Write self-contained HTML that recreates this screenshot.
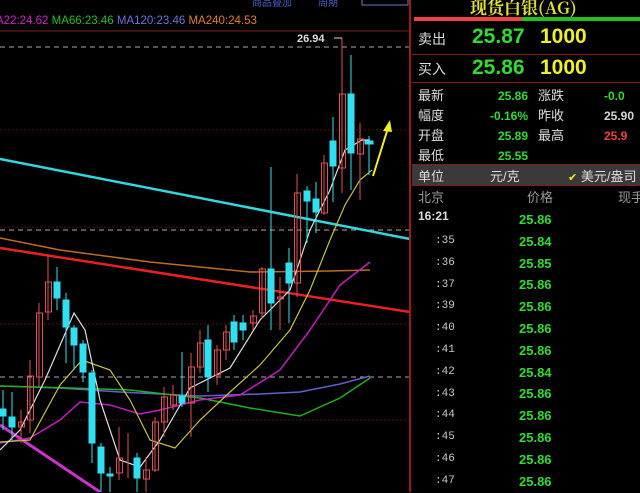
<!DOCTYPE html>
<html><head><meta charset="utf-8"><style>
body{margin:0;width:640px;height:492px;background:#000;overflow:hidden;position:relative;font-family:"Liberation Sans","Noto Sans CJK SC",sans-serif}
.a{position:absolute;white-space:nowrap}
.g{color:#2fdc2f}.y{color:#f0f020}.w{color:#d8d8d8}.r{color:#f04040}
.t{font-size:11px;color:#c8c8c8;font-family:"Liberation Mono",monospace}
.p{font-size:13px;font-weight:bold;color:#2fdc2f;left:519px}
</style></head><body>
<svg class="a" style="left:0;top:0" width="412" height="492" viewBox="0 0 412 492">
<g stroke="#5a1010" stroke-dasharray="2,2" stroke-width="1">
<line x1="0" y1="130" x2="410" y2="130"/><line x1="0" y1="227" x2="410" y2="227"/><line x1="0" y1="324" x2="410" y2="324"/><line x1="0" y1="420" x2="410" y2="420"/></g>
<line x1="0" y1="31" x2="410" y2="31" stroke="#7a1818"/>
<g stroke="#aaa" stroke-dasharray="5,4"><line x1="0" y1="47" x2="410" y2="47"/><line x1="0" y1="230" x2="410" y2="230"/><line x1="0" y1="377" x2="410" y2="377"/></g>
<polyline points="0,238 60,250 150,262 250,272 330,271 370,270" fill="none" stroke="#c06a1e" stroke-width="1.5"/>
<line x1="0" y1="248" x2="410" y2="312" stroke="#e82020" stroke-width="2.5"/>
<line x1="0" y1="159" x2="410" y2="239" stroke="#30d8e0" stroke-width="2.5"/>
<line x1="0" y1="425" x2="100" y2="492" stroke="#d030d0" stroke-width="3"/>
<polyline points="0,386 60,388 120,392 200,396 260,394 300,392 340,384 370,376" fill="none" stroke="#6060d0" stroke-width="1.5"/>
<polyline points="0,386 70,388 130,390 200,398 250,408 300,416 340,398 370,378" fill="none" stroke="#20b020" stroke-width="1.5"/>
<polyline points="0,443 30,438 60,420 80,402 110,405 140,414 160,410 200,400 240,395 280,370 310,330 340,285 370,262" fill="none" stroke="#c020c0" stroke-width="1.5"/>
<polyline points="0,442 30,440 60,385 82,360 110,370 130,400 150,440 175,448 200,420 230,392 260,365 290,330 310,290 330,240 345,205 360,180 372,170" fill="none" stroke="#c8c040" stroke-width="1.2"/>
<polyline points="0,450 20,430 45,380 74,313 85,330 100,400 120,460 140,467 160,440 190,388 230,368 260,320 290,290 310,230 330,190 345,150 362,140 370,140" fill="none" stroke="#ddd" stroke-width="1.2"/>
<g stroke-width="1">
<!-- candles: x, body top, body bottom, hi, lo -->
<g stroke="#30e0f0" fill="#30e0f0">
<line x1="3" y1="390" x2="3" y2="430"/><rect x="0" y="409" width="6" height="7"/>
<line x1="12" y1="392" x2="12" y2="440"/><rect x="9" y="417" width="6" height="10"/>
<line x1="57" y1="267" x2="57" y2="310"/><rect x="54" y="282" width="6" height="16"/>
<line x1="66" y1="293" x2="66" y2="363"/><rect x="63" y="300" width="6" height="27"/>
<line x1="74" y1="325" x2="74" y2="370"/><rect x="71" y="328" width="6" height="17"/>
<line x1="83" y1="340" x2="83" y2="382"/><rect x="80" y="344" width="6" height="28"/>
<line x1="92" y1="370" x2="92" y2="463"/><rect x="89" y="373" width="6" height="70"/>
<line x1="101" y1="443" x2="101" y2="492"/><rect x="98" y="447" width="6" height="26"/>
<line x1="110" y1="467" x2="110" y2="492"/><rect x="107" y="474" width="6" height="2"/>
<line x1="137" y1="453" x2="137" y2="492"/><rect x="134" y="458" width="6" height="20"/>
<line x1="182" y1="352" x2="182" y2="407"/><rect x="179" y="396" width="6" height="7"/>
<line x1="208" y1="325" x2="208" y2="392"/><rect x="205" y="340" width="6" height="37"/>
<line x1="234" y1="315" x2="234" y2="350"/><rect x="231" y="322" width="6" height="20"/>
<line x1="243" y1="315" x2="243" y2="340"/><rect x="240" y="323" width="6" height="7"/>
<line x1="271" y1="167" x2="271" y2="330"/><rect x="268" y="269" width="6" height="34"/>
<line x1="289" y1="248" x2="289" y2="323"/><rect x="286" y="263" width="6" height="20"/>
<line x1="307" y1="186" x2="307" y2="243"/><rect x="304" y="191" width="6" height="10"/>
<line x1="316" y1="182" x2="316" y2="233"/><rect x="313" y="199" width="6" height="13"/>
<line x1="333" y1="117" x2="333" y2="202"/><rect x="330" y="141" width="6" height="25"/>
<line x1="351" y1="55" x2="351" y2="190"/><rect x="348" y="94" width="6" height="59"/>
<line x1="369" y1="136" x2="369" y2="175"/><rect x="365" y="141" width="8" height="3"/>
</g>
<g stroke="#e05050" fill="none">
<line x1="21" y1="410" x2="21" y2="443"/><rect x="18.5" y="422" width="6" height="5"/>
<line x1="30" y1="360" x2="30" y2="433"/><rect x="27.5" y="376" width="6" height="44"/>
<line x1="39" y1="303" x2="39" y2="387"/><rect x="36.5" y="313" width="6" height="64"/>
<line x1="48" y1="255" x2="48" y2="320"/><rect x="45.5" y="282" width="6" height="30"/>
<line x1="119" y1="427" x2="119" y2="480"/><rect x="116.5" y="458" width="6" height="15"/>
<line x1="128" y1="433" x2="128" y2="478"/>
<line x1="146" y1="457" x2="146" y2="492"/><rect x="143.5" y="470" width="6" height="9"/>
<line x1="155" y1="417" x2="155" y2="472"/><rect x="152.5" y="422" width="6" height="48"/>
<line x1="164" y1="387" x2="164" y2="437"/><rect x="161.5" y="397" width="6" height="25"/>
<line x1="173" y1="385" x2="173" y2="410"/><rect x="170.5" y="395" width="6" height="10"/>
<line x1="191" y1="353" x2="191" y2="437"/><rect x="188.5" y="367" width="6" height="36"/>
<line x1="200" y1="330" x2="200" y2="373"/><rect x="197.5" y="343" width="6" height="24"/>
<line x1="217" y1="345" x2="217" y2="385"/><rect x="214.5" y="350" width="6" height="25"/>
<line x1="226" y1="325" x2="226" y2="360"/><rect x="223.5" y="332" width="6" height="18"/>
<line x1="253" y1="310" x2="253" y2="330"/><rect x="250.5" y="316" width="6" height="7"/>
<line x1="262" y1="267" x2="262" y2="318"/><rect x="259.5" y="269" width="6" height="44"/>
<line x1="280" y1="277" x2="280" y2="330"/><rect x="277.5" y="297" width="6" height="2"/>
<line x1="297" y1="174" x2="297" y2="297"/><rect x="294.5" y="193" width="6" height="90"/>
<line x1="324" y1="155" x2="324" y2="215"/><rect x="321.5" y="163" width="6" height="50"/>
<line x1="342" y1="38" x2="342" y2="193"/><rect x="339.5" y="94" width="6" height="74"/>
<line x1="360" y1="123" x2="360" y2="200"/><rect x="357.5" y="139" width="6" height="15"/>
</g></g>
<line x1="334" y1="38" x2="342" y2="38" stroke="#ddd"/>
<line x1="373" y1="176" x2="388" y2="128" stroke="#f0f020" stroke-width="2"/>
<polygon points="390,120 383,131 392,132" fill="#f0f020"/>
<text x="297" y="42" font-size="11" font-weight="bold" fill="#ddd" font-family="Liberation Sans">26.94</text>
<text x="-4" y="24" font-size="11.5" font-family="Liberation Sans"><tspan fill="#d020d0">A22:24.62 </tspan><tspan fill="#20c020">MA66:23.46 </tspan><tspan fill="#7070e0">MA120:23.46 </tspan><tspan fill="#e08020">MA240:24.53</tspan></text>
<text x="252" y="6" font-size="10" fill="#4060c0">商品叠加</text><text x="318" y="6" font-size="10" fill="#4060c0">周期</text>
<rect x="362" y="-4" width="46" height="9" fill="none" stroke="#6080c0"/>
<line x1="410" y1="0" x2="410" y2="492" stroke="#a01818" stroke-width="2"/>
</svg>
<div class="a" style="left:470px;top:-6px;font-size:17px;font-weight:bold;color:#e0e030;font-family:'Noto Serif CJK SC',serif">现货白银(AG)</div>
<div class="a" style="left:414px;top:17px;width:108px;height:4px;background:#f04040"></div>
<div class="a" style="left:522px;top:17px;width:118px;height:4px;background:#20c020"></div>
<div class="a" style="left:412px;top:54px;width:228px;height:1px;background:#8a1818"></div>
<div class="a" style="left:412px;top:82px;width:228px;height:1px;background:#8a1818"></div>
<div class="a" style="left:418px;top:29px;font-size:14px;color:#ddd">卖出</div>
<div class="a g" style="left:472px;top:25px;font-size:21px;font-weight:bold">25.87</div>
<div class="a y" style="left:540px;top:25px;font-size:21px;font-weight:bold">1000</div>
<div class="a" style="left:418px;top:59px;font-size:14px;color:#ddd">买入</div>
<div class="a g" style="left:472px;top:56px;font-size:21px;font-weight:bold">25.86</div>
<div class="a y" style="left:540px;top:56px;font-size:21px;font-weight:bold">1000</div>
<div class="a" style="left:418px;top:86px;font-size:13px;color:#ddd;line-height:20px">最新<br>幅度<br>开盘<br>最低</div>
<div class="a g" style="left:480px;top:86px;width:48px;text-align:right;font-size:12px;font-weight:bold;line-height:20px">25.86<br>-0.16%<br>25.89<br>25.55</div>
<div class="a" style="left:538px;top:86px;font-size:13px;color:#ddd;line-height:20px">涨跌<br>昨收<br>最高</div>
<div class="a" style="left:604px;top:86px;font-size:12px;font-weight:bold;line-height:20px"><span class="g">-0.0</span><br><span class="w">25.90</span><br><span class="r">25.9</span></div>
<div class="a" style="left:412px;top:164px;width:228px;height:20px;background:#3a3a3a;border-top:1px solid #8a1818;border-bottom:1px solid #8a1818"></div>
<div class="a" style="left:418px;top:166px;font-size:13px;color:#ddd">单位</div>
<div class="a" style="left:490px;top:166px;font-size:13px;color:#ddd">元/克</div>
<div class="a" style="left:568px;top:166px;font-size:13px;color:#ddd"><span class="y" style="font-size:11px">✔</span> 美元/盎司</div>
<div class="a" style="left:418px;top:187px;font-size:13px;color:#999">北京</div>
<div class="a" style="left:527px;top:187px;font-size:13px;color:#999">价格</div>
<div class="a" style="left:618px;top:187px;font-size:13px;color:#999">现手</div>
<div class="a" style="left:418px;top:209px;font-size:12px;font-weight:bold;color:#ddd">16:21</div>
<div class="a t" style="left:435px;top:231px;line-height:21.8px">:35<br>:36<br>:37<br>:39<br>:40<br>:41<br>:42<br>:43<br>:44<br>:45<br>:46<br>:47</div>
<div class="a p" style="top:209px;line-height:21.8px">25.86<br>25.84<br>25.85<br>25.86<br>25.86<br>25.86<br>25.86<br>25.84<br>25.86<br>25.86<br>25.86<br>25.86<br>25.86</div>
</body></html>
